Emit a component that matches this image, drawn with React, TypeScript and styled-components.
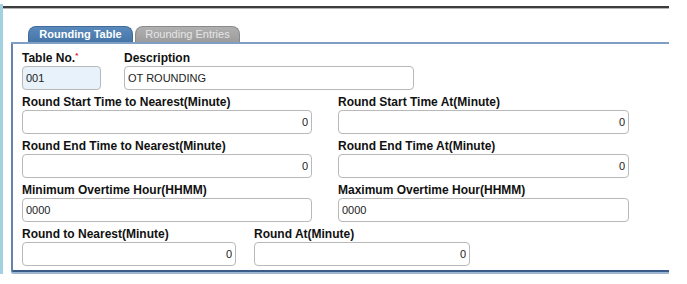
import * as React from 'react';
import styled, {createGlobalStyle} from 'styled-components';

const GlobalStyle = createGlobalStyle`
  html, body {
    margin: 0;
    padding: 0;
    background: #fff;
    font-family: "Liberation Sans", Arial, sans-serif;
  }
`;

const Page = styled.div`
  display: flex;
  align-items: flex-start;
  width: 687px;
  height: 284px;
  overflow: hidden;
`;

const SideBar = styled.div`
  width: 3px;
  height: 270px;
  margin-top: 4px;
  background: #a4d1df;
`;

const Main = styled.div`
  width: 666px;
  padding-top: 6px;
`;

const TopRule = styled.div`
  height: 2px;
  background: #3d3d3d;
  border-bottom: 1px solid #b4b4b4;
`;

const Content = styled.div`
  margin: 17px 0 0 8px;
`;

const TabStrip = styled.div`
  display: flex;
  gap: 2px;
  padding-left: 17px;
  border-bottom: 2px solid #7f9ec4;
`;

const Tab = styled.div<{$active?: boolean}>`
  box-sizing: border-box;
  width: 105px;
  height: 16px;
  border-radius: 8px 8px 0 0;
  border: 1px solid ${p => (p.$active ? '#3e6b99' : '#8a8a8a')};
  border-bottom: none;
  background: ${p =>
    p.$active
      ? 'linear-gradient(#5a8abb, #4576a7)'
      : 'linear-gradient(#b0b0b0, #9c9c9c)'};
  color: ${p => (p.$active ? '#fff' : '#e6e6e6')};
  font-size: 11px;
  font-weight: ${p => (p.$active ? 'bold' : 'normal')};
  line-height: 15px;
  text-align: center;
  white-space: nowrap;
`;

const Panel = styled.div`
  display: flex;
  flex-direction: column;
  gap: 5px;
  padding: 7px 0 4px 9px;
  border-left: 2px solid #6283ab;
  border-bottom: 2px solid #3a5c89;
  border-bottom-left-radius: 2px;
  box-shadow: 0 2px 0 #9db4d2;
`;

const Row = styled.div<{$gap: number}>`
  display: flex;
  gap: ${p => p.$gap}px;
`;

const Field = styled.div<{$width: number}>`
  display: flex;
  flex-direction: column;
  width: ${p => p.$width}px;
`;

const Label = styled.label`
  height: 14px;
  margin-bottom: 1px;
  font-size: 12px;
  font-weight: bold;
  line-height: 14px;
  color: #111;
  white-space: nowrap;
`;

const Required = styled.span`
  color: #e02020;
  font-size: 8px;
  vertical-align: top;
  line-height: 10px;
`;

const Input = styled.input<{$number?: boolean; $key?: boolean}>`
  box-sizing: border-box;
  width: 100%;
  height: 24px;
  padding: 0 3px;
  border: 1px solid #b9b9b9;
  border-radius: 4px;
  background: ${p => (p.$key ? '#e7f2fb' : '#fff')};
  font-family: "Liberation Sans", Arial, sans-serif;
  font-size: 11px;
  color: #222;
  text-align: ${p => (p.$number ? 'right' : 'left')};
  outline: none;
`;

type FieldDef = {
  label: string;
  value: string;
  width: number;
  number?: boolean;
};

const rows: {gap: number; fields: FieldDef[]}[] = [
  {
    gap: 26,
    fields: [
      {label: 'Round Start Time to Nearest(Minute)', value: '0', width: 290, number: true},
      {label: 'Round Start Time At(Minute)', value: '0', width: 291, number: true},
    ],
  },
  {
    gap: 26,
    fields: [
      {label: 'Round End Time to Nearest(Minute)', value: '0', width: 290, number: true},
      {label: 'Round End Time At(Minute)', value: '0', width: 291, number: true},
    ],
  },
  {
    gap: 26,
    fields: [
      {label: 'Minimum Overtime Hour(HHMM)', value: '0000', width: 290},
      {label: 'Maximum Overtime Hour(HHMM)', value: '0000', width: 291},
    ],
  },
  {
    gap: 18,
    fields: [
      {label: 'Round to Nearest(Minute)', value: '0', width: 214, number: true},
      {label: 'Round At(Minute)', value: '0', width: 216, number: true},
    ],
  },
];

const App = () => {
  return (
    <>
      <GlobalStyle />
      <Page>
        <SideBar />
        <Main>
          <TopRule />
          <Content>
            <TabStrip>
              <Tab $active>Rounding Table</Tab>
              <Tab>Rounding Entries</Tab>
            </TabStrip>
            <Panel>
              <Row $gap={23}>
                <Field $width={79}>
                  <Label>
                    Table No.<Required>*</Required>
                  </Label>
                  <Input $key readOnly value="001" />
                </Field>
                <Field $width={290}>
                  <Label>Description</Label>
                  <Input readOnly value="OT ROUNDING" />
                </Field>
              </Row>
              {rows.map((row, i) => (
                <Row key={i} $gap={row.gap}>
                  {row.fields.map(f => (
                    <Field key={f.label} $width={f.width}>
                      <Label>{f.label}</Label>
                      <Input $number={f.number} readOnly value={f.value} />
                    </Field>
                  ))}
                </Row>
              ))}
            </Panel>
          </Content>
        </Main>
      </Page>
    </>
  );
};

export default App;
